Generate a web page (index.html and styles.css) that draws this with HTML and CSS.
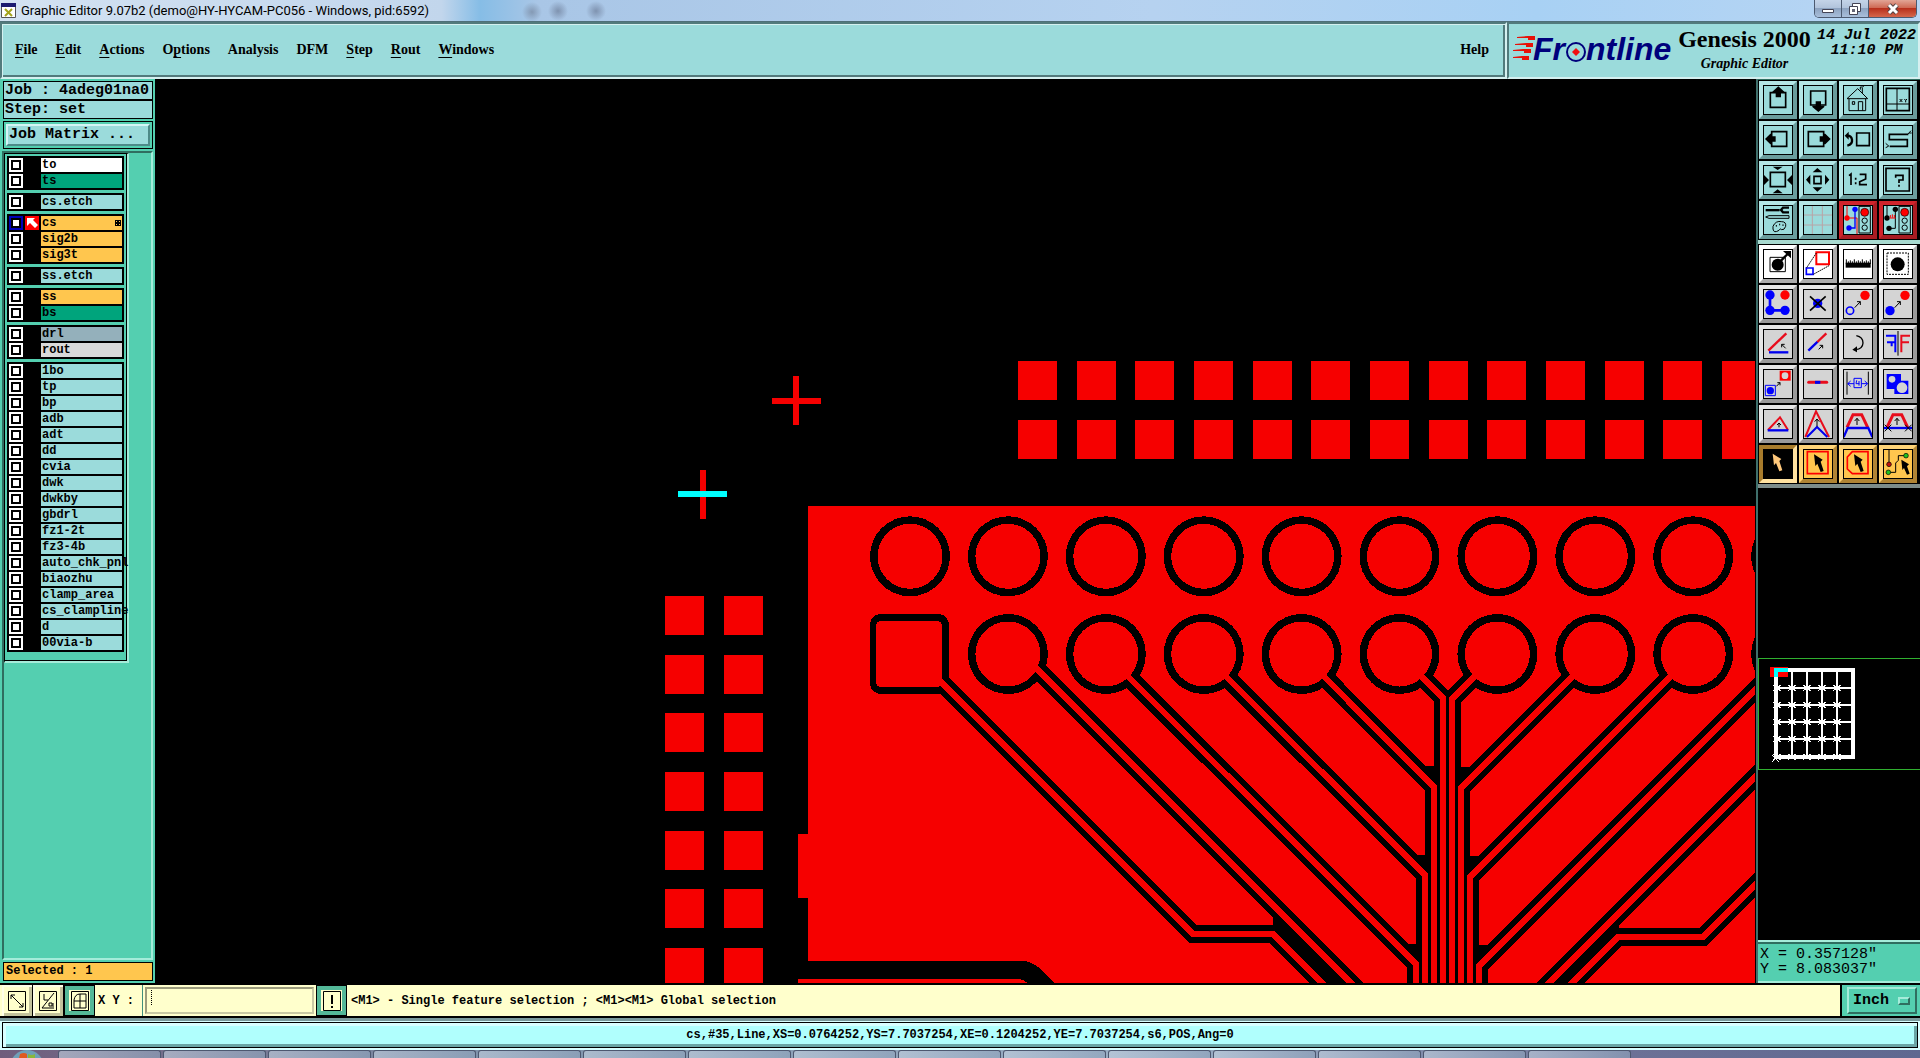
FILE: index.html
```html
<!DOCTYPE html>
<html lang="en">
<head>
    <meta charset="UTF-8">
    <meta name="viewport" content="width=device-width, initial-scale=1.0">
    <title>Graphic Editor 9.07b2</title>
    <link rel="stylesheet" href="styles.css">
</head>
<body>
    <!-- Window title -->
    <div class="titlebar">
        <svg class="app-icon" viewBox="0 0 15 15"><path fill="#fff" stroke="#555" d="M.5.5h14v14H.5z"/><path fill="#1b1b70" d="M0 0h15v4H0z"/><path stroke="#a3a31c" stroke-width="2" d="M4 6l7 7M11 6l-7 7"/></svg>
        <span class="title">Graphic Editor 9.07b2 (demo@HY-HYCAM-PC056 - Windows, pid:6592)</span>
        <div class="win-buttons">
            <button aria-label="Minimize"><svg viewBox="0 0 14 12"><path fill="#fff" stroke="#445" d="M1.5 6.5h11v3h-11z"/></svg></button>
            <button aria-label="Restore"><svg viewBox="0 0 14 12"><path fill="#fff" stroke="#445" d="M4.5.5h8v8h-8z"/><path fill="#fff" stroke="#445" d="M1.5 3.5h8v8h-8z"/><path fill="#667" d="M4 6h3v3H4z"/></svg></button>
            <button class="close" aria-label="Close"><svg viewBox="0 0 14 12"><path stroke="#544" stroke-width="5" d="M3 2l8 8M11 2l-8 8"/><path stroke="#fff" stroke-width="3" d="M3 2l8 8M11 2l-8 8"/></svg></button>
        </div>
    </div>

    <header>
        <nav class="menubar">
            <button><u>F</u>ile</button>
            <button><u>E</u>dit</button>
            <button><u>A</u>ctions</button>
            <button>O<u>p</u>tions</button>
            <button>Analysis</button>
            <button>DFM</button>
            <button><u>S</u>tep</button>
            <button><u>R</u>out</button>
            <button><u>W</u>indows</button>
            <button class="help">Help</button>
        </nav>
        <div class="brand">
            <svg class="logo" viewBox="0 0 164 48">
                <g fill="#e81008">
                    <path d="M4 13l11-1h7v4h-7v-2L4 14z"/>
                    <path d="M2 20l11-1h7v4h-7v-2L2 21z"/>
                    <path d="M0 26l10-1h8v4h-7v-2L0 27z"/>
                    <path d="M0 33l9-1h7v4H9v-2L0 34z"/>
                </g>
                <text x="20" y="36" class="logo-text">Fr</text>
                <text x="73" y="36" class="logo-text">ntline</text>
                <circle cx="63" cy="28" r="9" fill="#9bdbdb" stroke="#00007c" stroke-width="2"/>
                <path fill="#f01010" d="M63 24l4 4-4 4-4-4z"/>
            </svg>
            <div class="product">
                <div class="product-name">Genesis 2000</div>
                <div class="product-sub">Graphic Editor</div>
            </div>
            <div class="clock">14 Jul 2022<br>11:10 PM</div>
        </div>
    </header>

    <main>
        <!-- Job and layers -->
        <aside class="left">
            <div class="job">Job : 4adeg01na0</div>
            <div class="job">Step: set</div>
            <div class="matrix"><button>Job Matrix ...</button></div>
            <div class="layer-area">
                <div class="layer-list">
                    <div class="group">
                        <label class="layer white"><input type="checkbox"><i></i><span>to</span></label>
                        <label class="layer mask"><input type="checkbox"><i></i><span>ts</span></label>
                    </div>
                    <div class="group">
                        <label class="layer"><input type="checkbox"><i></i><span>cs.etch</span></label>
                    </div>
                    <div class="group">
                        <label class="layer signal current"><input type="checkbox" checked><i><svg viewBox="0 0 14 14"><path fill="#fff" d="M2 2h8L8 4l5 5-3 3-5-5-3 3z"/></svg></i><span>cs<svg class="mark" viewBox="0 0 6 6"><path fill="#000" d="M0 0h6v6H0z"/><path fill="#ffc64e" d="M1 1h1v1H1zM4 1h1v1H4zM1 4h1v1H1zM4 4h1v1H4z"/></svg></span></label>
                        <label class="layer signal"><input type="checkbox"><i></i><span>sig2b</span></label>
                        <label class="layer signal"><input type="checkbox"><i></i><span>sig3t</span></label>
                    </div>
                    <div class="group">
                        <label class="layer"><input type="checkbox"><i></i><span>ss.etch</span></label>
                    </div>
                    <div class="group">
                        <label class="layer signal"><input type="checkbox"><i></i><span>ss</span></label>
                        <label class="layer mask"><input type="checkbox"><i></i><span>bs</span></label>
                    </div>
                    <div class="group">
                        <label class="layer drill"><input type="checkbox"><i></i><span>drl</span></label>
                        <label class="layer rout"><input type="checkbox"><i></i><span>rout</span></label>
                    </div>
                    <div class="group">
                        <label class="layer"><input type="checkbox"><i></i><span>1bo</span></label>
                        <label class="layer"><input type="checkbox"><i></i><span>tp</span></label>
                        <label class="layer"><input type="checkbox"><i></i><span>bp</span></label>
                        <label class="layer"><input type="checkbox"><i></i><span>adb</span></label>
                        <label class="layer"><input type="checkbox"><i></i><span>adt</span></label>
                        <label class="layer"><input type="checkbox"><i></i><span>dd</span></label>
                        <label class="layer"><input type="checkbox"><i></i><span>cvia</span></label>
                        <label class="layer"><input type="checkbox"><i></i><span>dwk</span></label>
                        <label class="layer"><input type="checkbox"><i></i><span>dwkby</span></label>
                        <label class="layer"><input type="checkbox"><i></i><span>gbdrl</span></label>
                        <label class="layer"><input type="checkbox"><i></i><span>fz1-2t</span></label>
                        <label class="layer"><input type="checkbox"><i></i><span>fz3-4b</span></label>
                        <label class="layer"><input type="checkbox"><i></i><span>auto_chk_pnl</span></label>
                        <label class="layer"><input type="checkbox"><i></i><span>biaozhu</span></label>
                        <label class="layer"><input type="checkbox"><i></i><span>clamp_area</span></label>
                        <label class="layer"><input type="checkbox"><i></i><span>cs_clampline</span></label>
                        <label class="layer"><input type="checkbox"><i></i><span>d</span></label>
                        <label class="layer"><input type="checkbox"><i></i><span>00via-b</span></label>
                    </div>
                </div>
            </div>
            <div class="selected">Selected : 1</div>
        </aside>

        <!-- Board view -->
        <section class="canvas">
            <svg viewBox="155 79 1601 904" preserveAspectRatio="xMinYMin slice" shape-rendering="crispEdges">
                <defs>
                    <g id="traces" fill="none">
                        <path d="M913 654L1193 934H1273L1332 993"/>
                        <path d="M1022 654L1362 994"/>
                        <path d="M1105.6 654L1416 964V990"/>
                        <path d="M1203.5 654L1425 875V990"/>
                        <path d="M1301.4 654L1434 787V990"/>
                        <path d="M1399.3 654L1443 698V990"/>
                        <path d="M1497.2 654L1452 699V990"/>
                        <path d="M1595 654L1461 788V990"/>
                        <path d="M1693 654L1470 877V990"/>
                        <path d="M1791 654L1479 966V990"/>
                        <path d="M1765 767L1539 993"/>
                        <path d="M1765 875L1703 937H1618L1563 992"/>
                    </g>
                </defs>
                <g fill="#f60000">
                    <path d="M808 506H1755V984H808V898H798V834H808z"/>
                    <path stroke="#f60000" stroke-width="39" stroke-dasharray="39 19.65" d="M1018 380.5H1755M1018 439.5H1755M684.5 596V990M743.5 596V990"/>
                    <path d="M793 376h6v49h-6zM772 398h49v6h-49zM700 470h6v49h-6z"/>
                </g>
                <path fill="#0ff" d="M678 491h49v6h-49z"/>
                <!-- bottom left slot -->
                <path d="M806 961H1026Q1033 963 1038 967L1055 984H1028Q1024 979 1017 979H806z"/>
                <path fill="#f60000" d="M798 979h219q7 1 11 5H798z"/>
                <!-- clearances -->
                <g>
                    <rect x="870" y="614" width="79" height="80" rx="11"/>
                    <path fill="none" stroke="#000" stroke-width="80" stroke-linecap="round" stroke-dasharray="0 97.9" d="M910 556.3H1850M1007.9 654H1850"/>
                    <use href="#traces" stroke="#000" stroke-width="18"/>
                    <path d="M1273 905V934L1322 983H1352zM1619 920V937L1573 983H1549L1608 920zM1426 766h12v25zM1462 767h9l-14 20v-20zM1417 855h12v25zM1471 856h9l-14 20v-20zM1408 944h12v25zM1480 945h9l-14 20v-20z"/>
                </g>
                <!-- pads and tracks -->
                <g>
                    <rect x="876" y="621" width="66" height="66" rx="5" fill="#f60000"/>
                    <path fill="none" stroke="#f60000" stroke-width="65" stroke-linecap="round" stroke-dasharray="0 97.9" d="M910 556.3H1850M1007.9 654H1850"/>
                    <use href="#traces" stroke="#f60000" stroke-width="6"/>
                </g>
                <path d="M1755 79h1v904h-1z"/>
            </svg>
        </section>

        <!-- Tools -->
        <aside class="right">
            <div class="tools view-tools">
                <button aria-label="Pan up"><svg viewBox="3 3 84 84"><path class="k5" d="M22 23h46v44H22z"/><path d="M46 4l18 16v4H54v13H38V24H28v-4z"/></svg></button>
                <button aria-label="Pan down"><svg viewBox="3 3 84 84"><path class="k5" d="M23 18h45v42H23z"/><path d="M46 81L28 66v-4h10V49h16v13h10v4z"/></svg></button>
                <button aria-label="Home"><svg viewBox="3 3 84 84"><path class="k3" d="M12 41L44 11 74 41zM18 41v36h50V41M52 14V6h6l6-4M58 8v16M46 77V50h13v27M28 50h7v8h-7z"/></svg></button>
                <button aria-label="Zoom to XY"><svg viewBox="3 3 84 84"><path class="k5" d="M10 10h69v67H10z"/><path class="k3" d="M42 10v67M10 57h69M50 42l8 9M58 42l-8 9M64 42l4 4 4-4M68 46v6"/></svg></button>
                <button aria-label="Pan left"><svg viewBox="3 3 84 84"><path class="k5" d="M26 20h45v44H26z"/><path d="M6 42l16-16h4v8h12v16H26v8h-4z"/></svg></button>
                <button aria-label="Pan right"><svg viewBox="3 3 84 84"><path class="k5" d="M16 20h46v44H16z"/><path d="M83 42L67 26h-4v8H50v16h13v8h4z"/></svg></button>
                <button aria-label="Previous view"><svg viewBox="3 3 84 84"><path class="k5" d="M41 24h38v38H41z"/><path class="k7" d="M13 62q16-4 14-18-2-12-14-12"/><path d="M5 32l12-12v24z"/></svg></button>
                <button aria-label="Serpentine"><svg viewBox="3 3 84 84"><path class="k5" d="M76 28H19v16h54v20H20"/><path class="k3" d="M74 28l10-11M78 24h8M18 64L8 55M8 68l8-4"/></svg></button>
                <button aria-label="Zoom in"><svg viewBox="3 3 84 84"><path class="k5" d="M22 22h45v43H22z"/><path d="M29 5h30L44 15zM29 85h30L44 73zM3 30v30l15-15zM87 30v30L72 45z"/></svg></button>
                <button aria-label="Zoom out"><svg viewBox="3 3 84 84"><path class="k5" d="M33 34h21v22H33z"/><path d="M43 9l15 13H29zM43 80l15-13H29zM9 44l13-15v30zM79 44L66 29v30z"/></svg></button>
                <button aria-label="Scale 1:2"><svg viewBox="3 3 84 84"><path class="k5" d="M18 32l6-5v33M38 38v6M38 52v6M50 28h18v14L50 50v9h22"/></svg></button>
                <button aria-label="Help on tool"><svg viewBox="3 3 84 84"><path class="k5" d="M9 10h70v68H9zM38 38v-7h22v14H48v9M48 59v6"/></svg></button>
                <button aria-label="Setup"><svg viewBox="3 3 84 84"><path d="M8 12h42v7H8z"/><path class="k7" d="M78 8H60l-6 7 6 7h18"/><path class="k3" d="M8 36l10-4h60v8H18zM30 64q8-18 26-14 14 0 12 14-4 12-12 10-4-6-8 2-16 10-18-4zM40 60v5M50 56v5M60 58v5"/></svg></button>
                <button aria-label="Grid"><svg viewBox="3 3 84 84"><path fill="none" stroke="#b8a4a6" stroke-width="3" d="M28 0v90M58 0v90M0 30h90M0 60h90"/></svg></button>
                <button class="alert" aria-label="DRC on"><svg viewBox="3 3 84 84"><path fill="none" stroke="#f00" stroke-width="3" d="M12 0v39h30v51"/><path fill="none" stroke="#00f" stroke-width="4" d="M36 13v56H18"/><g fill="#00f"><circle cx="36" cy="13" r="8"/><circle cx="18" cy="69" r="8"/></g><circle cx="12" cy="39" r="8" fill="#f00"/><path class="k3" d="M48 4h34v80H48z"/><circle cx="65" cy="22" r="12" fill="#f00" stroke="#000" stroke-width="2"/><g class="k3"><circle cx="65" cy="47" r="8"/><circle cx="65" cy="68" r="8"/></g></svg></button>
                <button class="alert" aria-label="DRC off"><svg viewBox="3 3 84 84"><path class="k3" d="M12 0v39M37 13v57H18"/><circle cx="37" cy="13" r="8"/><circle cx="12" cy="39" r="8"/><circle cx="18" cy="70" r="8"/><path fill="none" stroke="#f00" stroke-width="3" d="M20 39h18M22 30v8M28 28v10M34 30v8"/><path class="k3" d="M48 4h34v80H48z"/><circle cx="65" cy="22" r="12" fill="#f00" stroke="#000" stroke-width="2"/><g class="k3"><circle cx="65" cy="47" r="8"/><circle cx="65" cy="68" r="8"/></g></svg></button>
            </div>
            <div class="tools edit-tools">
                <button class="plain" aria-label="Measure pad"><svg viewBox="3 3 84 84"><path class="k3" d="M21 25h46v43H21z"/><circle cx="44" cy="47" r="18"/><path class="k7" d="M54 35l20-20"/><path d="M60 6h24v22z"/></svg></button>
                <button class="plain" aria-label="Measure net"><svg viewBox="3 3 84 84"><path fill="none" stroke="#f00" stroke-width="6" d="M40 10h38v36H40z"/><path fill="none" stroke="#00f" stroke-width="5" d="M10 57h20v19H10z"/><path class="k3" stroke-dasharray="5 2" d="M11 56L40 12M31 76l47-26"/></svg></button>
                <button class="plain" aria-label="Ruler"><svg viewBox="3 3 84 84"><path d="M8 41h75v15H8z"/><path class="k3" d="M10 31v14M16 37v8M22 34v8M28 37v8M34 31v14M40 37v8M46 34v8M52 37v8M58 31v14M64 37v8M70 34v8M76 37v8M82 31v14"/></svg></button>
                <button class="plain" aria-label="Select frame"><svg viewBox="3 3 84 84"><path class="k3" stroke-dasharray="6 3" d="M12 12h64v64H12z"/><circle cx="44" cy="46" r="21"/></svg></button>

                <button aria-label="Copy pads"><svg viewBox="3 3 84 84"><path fill="none" stroke="#00f" stroke-width="8" d="M21 18v46h45"/><g fill="#00f"><circle cx="21" cy="18" r="14"/><circle cx="21" cy="64" r="14"/><circle cx="66" cy="64" r="14"/></g><circle cx="66" cy="18" r="14" fill="#f00"/></svg></button>
                <button aria-label="Delete"><svg viewBox="3 3 84 84"><circle cx="44" cy="43" r="14" fill="#00f"/><path class="k5" d="M21 22l47 43M68 22L21 65"/></svg></button>
                <button aria-label="Move"><svg viewBox="3 3 84 84"><circle cx="21" cy="65" r="11" fill="none" stroke="#00f" stroke-width="5"/><path class="k3" d="M35 56l17-18M42 38h10v10"/><circle cx="66" cy="19" r="14" fill="#f00"/></svg></button>
                <button aria-label="Copy"><svg viewBox="3 3 84 84"><circle cx="21" cy="65" r="14" fill="#00f"/><path class="k3" d="M35 56l17-18M42 38h10v10"/><circle cx="66" cy="19" r="14" fill="#f00"/></svg></button>

                <button aria-label="Rotate line"><svg viewBox="3 3 84 84"><path fill="none" stroke="#e80c1c" stroke-width="7" d="M16 65l54-52"/><path fill="none" stroke="#00e" stroke-width="7" d="M18 70h58"/><path class="k3" d="M68 58L56 46M56 55v-9h9"/></svg></button>
                <button aria-label="Extend line"><svg viewBox="3 3 84 84"><path fill="none" stroke="#00e" stroke-width="7" d="M16 65l28-27"/><path fill="none" stroke="#e80c1c" stroke-width="7" d="M43 39l27-26"/><path class="k3" d="M47 61l12-12M50 49h9v9"/></svg></button>
                <button aria-label="Rotate"><svg viewBox="3 3 84 84"><path fill="none" stroke="#000" stroke-width="4" d="M40 20q20 4 20 22-1 18-22 20"/><path d="M28 62l14-10v18z"/></svg></button>
                <button aria-label="Mirror"><svg viewBox="3 3 84 84"><path fill="none" stroke="#00f" stroke-width="6" d="M9 20h28v50M12 40h25M26 40v12"/><path class="k3" d="M45 6v74"/><path fill="none" stroke="#e80c1c" stroke-width="6" d="M81 20H55v50M55 40h23"/></svg></button>

                <button aria-label="Replace symbol"><svg viewBox="3 3 84 84"><path fill="#f00" d="M50 5h33v30H50z"/><circle cx="66" cy="20" r="10" fill="#d4d4d4"/><path fill="none" stroke="#00f" stroke-width="3" d="M7 49h30v31H7z"/><circle cx="22" cy="65" r="11" fill="#00f"/><path class="k3" d="M40 52l11-11M43 41h8v8"/></svg></button>
                <button aria-label="Break line"><svg viewBox="3 3 84 84"><path fill="none" stroke="#e80c1c" stroke-width="9" stroke-linecap="round" d="M17 40h54"/><path stroke="#00e" stroke-width="9" d="M36 40h16"/></svg></button>
                <button aria-label="Set spacing"><svg viewBox="3 3 84 84"><path class="k3" d="M12 8v69M76 8v69"/><path fill="none" stroke="#00f" stroke-width="3" d="M33 28h22v28H33zM15 44h18M55 44h18M23 36l-9 8 9 8M65 36l9 8-9 8M41 34l-2 10h10M48 36v14"/></svg></button>
                <button aria-label="Change polarity"><svg viewBox="3 3 84 84"><path fill="#00f" d="M11 15h43v20h22v40H34V60H11z"/><circle cx="27" cy="31" r="10" fill="#d4d4d4"/><circle cx="57" cy="56" r="16" fill="#d4d4d4"/></svg></button>

                <button aria-label="Move corner"><svg viewBox="3 3 84 84"><path fill="none" stroke="#e80c1c" stroke-width="6" d="M15 63l36-38 24 38"/><path stroke="#00e" stroke-width="7" d="M14 64h62"/><path class="k3" d="M48 55V42M42 48l6-6 6 6"/></svg></button>
                <button aria-label="Stretch corner"><svg viewBox="3 3 84 84"><path fill="none" stroke="#e80c1c" stroke-width="6" d="M7 84L39 7l39 77"/><path fill="none" stroke="#00e" stroke-width="6" d="M12 84l30-30 31 30"/><path class="k3" d="M42 52V30M35 38l7-8 7 8"/></svg></button>
                <button aria-label="Stretch segment"><svg viewBox="3 3 84 84"><path fill="none" stroke="#e80c1c" stroke-width="9" d="M12 55l18-38h26l18 38"/><path fill="none" stroke="#00e" stroke-width="7" d="M2 84l12-27h62l12 27"/><path class="k3" d="M42 48V28M35 36l7-8 7 8"/></svg></button>
                <button aria-label="Split segment"><svg viewBox="3 3 84 84"><path fill="none" stroke="#e80c1c" stroke-width="9" d="M12 55l18-38h26l18 38"/><path stroke="#00e" stroke-width="7" d="M2 57h86"/><path class="k3" d="M42 48V28M35 36l7-8 7 8M5 47l20 20M25 47L5 67M66 47l20 20M86 47L66 67"/></svg></button>

                <button class="pick active" aria-label="Select feature"><svg viewBox="3 3 84 84"><path fill="#ffc87c" d="M29 14l26 16-6 6 9 28-9 3-10-25-6 7z"/></svg></button>
                <button class="pick" aria-label="Select in rectangle"><svg viewBox="3 3 84 84"><path fill="none" stroke="#f00" stroke-width="5" d="M13 8h62v66H13z"/><path d="M33 16l26 16-6 6 9 28-9 3-10-25-6 7z"/></svg></button>
                <button class="pick" aria-label="Select in polygon"><svg viewBox="3 3 84 84"><path fill="none" stroke="#f00" stroke-width="5" d="M28 8h47v66H28L13 60V24z"/><path d="M33 16l26 16-6 6 9 28-9 3-10-25-6 7z"/></svg></button>
                <button class="pick" aria-label="Select net"><svg viewBox="3 3 84 84"><path class="k3" d="M18 2v44M16 70h22V42l8-8V20h22"/><circle cx="18" cy="46" r="7" fill="#c01010" stroke="#000" stroke-width="2"/><circle cx="16" cy="70" r="7" fill="#1fc01f" stroke="#000" stroke-width="2"/><circle cx="69" cy="20" r="7" fill="#1fc01f" stroke="#000" stroke-width="2"/><path d="M55 32l23 14-6 6 8 22-8 3-9-20-5 6z"/></svg></button>
            </div>
            <div class="navigator">
                <svg viewBox="1758 488 162 454" preserveAspectRatio="xMinYMin meet" shape-rendering="crispEdges">
                    <path fill="none" stroke="#30b030" d="M1920 658.5H1758.5V769.5H1920"/>
                    <path fill="none" stroke="#fff" stroke-width="4" d="M1776 670h77v87h-77z"/>
                    <path fill="none" stroke="#fff" stroke-width="2" d="M1792 670v87M1807 670v87M1822 670v87M1837 670v87M1776 688h77M1776 705h77M1776 722h77M1776 739h77"/>
                    <defs>
                        <path id="x" d="M-4-3l8 6M4-3l-8 6"/>
                        <g id="xrow"><use href="#x" x="1777"/><use href="#x" x="1792"/><use href="#x" x="1807"/><use href="#x" x="1822"/><use href="#x" x="1837"/></g>
                    </defs>
                    <g stroke="#fff"><use href="#xrow" y="688"/><use href="#xrow" y="705"/><use href="#xrow" y="722"/><use href="#xrow" y="739"/><use href="#xrow" y="757"/><path d="M1772 755l7 7M1779 755l-7 7"/></g>
                    <path fill="#f00" d="M1770 667h18v10h-18z"/>
                    <path fill="#0ff" d="M1774 668h14v4h-10v5h-4z"/>
                </svg>
            </div>
            <div class="coords">X = 0.357128"<br>Y = 8.083037"</div>
        </aside>
    </main>

    <!-- Coordinate entry and messages -->
    <div class="entry">
        <button aria-label="Relative"><svg viewBox="0 0 18 20"><path class="k1" d="M.5.5h17v19H.5zM3 4l12 12M3 8V4h4M15 12v4h-4"/></svg></button>
        <button aria-label="Angle"><svg viewBox="0 0 18 20"><path class="k1" d="M.5.5h17v19H.5zM15 2L3 17h12M5 3v6h4M10 12h3v3h-3zM14 12v4"/></svg></button>
        <button class="on" aria-label="Snap"><svg viewBox="0 0 18 20"><path class="k1" d="M.5.5h17v19H.5zM3 9q1-6 6-6h6v14H3zM9 3v14M3 10h12"/></svg></button>
        <label for="xy">X Y :</label>
        <div class="xy-box"><input type="text" id="xy"></div>
        <button class="on" aria-label="Apply"><svg viewBox="0 0 18 20"><path class="k1" d="M.5.5h17v19H.5z"/><path d="M8 4h2v9H8zM8 15h2v2H8z"/></svg></button>
        <div class="message">&lt;M1&gt; - Single feature selection ; &lt;M1&gt;&lt;M1&gt; Global selection</div>
        <div class="units"><select aria-label="Units"><option>Inch</option><option>mm</option></select></div>
    </div>
    <div class="status"><div>cs,#35,Line,XS=0.0764252,YS=7.7037254,XE=0.1204252,YE=7.7037254,s6,POS,Ang=0</div></div>

    <div class="taskbar">
        <svg class="orb" viewBox="0 0 34 8"><circle cx="17" cy="17" r="17" fill="#6fa0b8"/><path fill="#e05a20" d="M10 4q4-2 7 0v4h-8z"/><path fill="#8ab83a" d="M18 4q4 2 7 0v4h-7z"/></svg>
        <i></i><i></i><i></i><i></i><i></i><i></i><i></i><i></i><i></i><i></i><i></i><i></i><i></i><i></i><i></i>
    </div>
</body>
</html>
```

FILE: styles.css
```css
*, *::after {
    box-sizing: border-box;
}

body {
    margin: 0;
    height: 100vh;
    display: flex;
    flex-direction: column;
    overflow: hidden;
    background: #000;
    color: #000;
    font: bold 12px/14px "Liberation Mono", monospace;
}

button {
    margin: 0;
    padding: 0;
    border: none;
    background: none;
    color: inherit;
    font: inherit;
}

svg {
    display: block;
}

.k1, .k3, .k5, .k7 {
    fill: none;
    stroke: #000;
}

.k1 { stroke-width: 1px; }
.k3 { stroke-width: 3px; }
.k5 { stroke-width: 5px; }
.k7 { stroke-width: 7px; }

/* title bar */
.titlebar {
    display: flex;
    align-items: center;
    height: 22px;
    flex: none;
    padding-right: 3px;
    background:
        radial-gradient(circle at 532px 12px, #8499b4 0, transparent 10px),
        radial-gradient(circle at 558px 11px, #7f93b0 0, transparent 10px),
        radial-gradient(circle at 596px 11px, #7f93b0 0, transparent 10px),
        linear-gradient(90deg, #d3e2f2 0, #c2d6ec 23%, #86bde6 25%, #a9c6e6 28%, #b6d2f0 60%, #a8d1f4 80%, #b9d5f3 100%);
    border-bottom: 1px solid #4f6f78;
}

.app-icon {
    width: 15px;
    height: 15px;
    margin-left: 1px;
}

.title {
    flex: 1;
    padding-left: 5px;
    font: 13px/20px Roboto, sans-serif;
}

.win-buttons {
    display: flex;
    align-self: flex-start;
    height: 18px;
    border: 1px solid #4c5a70;
    border-top: none;
    border-radius: 0 0 5px 5px;
    overflow: hidden;
}

.win-buttons button {
    width: 27px;
    display: flex;
    justify-content: center;
    align-items: center;
    border-right: 1px solid #4c5a70;
    background: linear-gradient(#c4d4e8 0, #b2c4dc 45%, #8da3c0 50%, #a9bfdb 100%);
}

.win-buttons .close {
    width: 47px;
    border: none;
    background: linear-gradient(#e2a596 0, #cf6a55 45%, #b8301c 50%, #d5674c 100%);
}

.win-buttons svg {
    width: 14px;
    height: 12px;
}

/* menu and brand */
header {
    display: flex;
    flex: none;
    height: 57px;
    background: #9bdbdb;
}

.menubar, .brand {
    border: 2px solid;
    border-color: #527a7c #d5f0f0 #d5f0f0 #527a7c;
}

.menubar {
    flex: 1;
    display: flex;
    align-items: center;
    gap: 18px;
    padding: 0 16px 2px 13px;
    font: bold 14px/18px "Liberation Serif", serif;
    box-shadow: inset 1px 1px #d5f0f0, inset -2px -2px #527a7c;
}

.menubar u {
    text-underline-offset: 3px;
}

.help {
    margin-left: auto;
}

.brand {
    width: 413px;
    display: flex;
    align-items: flex-start;
    padding: 0 2px 0 4px;
}

.logo {
    width: 164px;
    height: 48px;
    overflow: visible;
}

.logo-text {
    font: italic bold 32px "Liberation Sans", sans-serif;
    fill: #00007c;
}

.product {
    flex: 1;
    padding-right: 5px;
    text-align: center;
    font-family: "Liberation Serif", serif;
    white-space: nowrap;
}

.product-name {
    font-size: 24px;
    line-height: 30px;
}

.product-sub {
    font-size: 14px;
    font-style: italic;
    line-height: 20px;
}

.clock {
    font-size: 15px;
    line-height: 15px;
    font-style: italic;
    text-align: center;
    padding-top: 4px;
}

/* main area */
main {
    flex: 1;
    display: flex;
    min-height: 0;
}

.left {
    width: 155px;
    flex: none;
    display: flex;
    flex-direction: column;
    padding: 2px 2px 2px 3px;
    background: #54cfb0;
}

.job, .matrix, .selected {
    border: 1px solid #000;
}

.job {
    height: 19px;
    padding-left: 1px;
    background: #9bdbdb;
    font-size: 15px;
    line-height: 18px;
    white-space: nowrap;
}

.matrix {
    margin-top: 2px;
    padding: 2px;
}

.matrix button {
    display: block;
    width: 100%;
    height: 22px;
    padding-left: 1px;
    text-align: left;
    background: #9bdbdb;
    border: 2px solid;
    border-color: #d5f5f5 #4d8a88 #4d8a88 #d5f5f5;
    font-size: 15px;
    line-height: 18px;
}

.layer-area {
    flex: 1;
    min-height: 0;
    margin: 2px 0 2px -1px;
    border: 2px solid;
    border-color: #2f6e60 #a5ecda #a5ecda #2f6e60;
}

.layer-list {
    width: 125px;
    padding: 2px 2px 9px 2px;
    display: flex;
    flex-direction: column;
    gap: 3px;
    border: 1px solid #000;
    border-right: 2px solid #a5ecda;
    border-bottom: 2px solid #a5ecda;
    box-shadow: inset -1px -1px #000;
}

.group {
    width: 117px;
    display: flex;
    flex-direction: column;
    gap: 2px;
    padding: 2px;
    background: #000;
}

.layer {
    display: flex;
    height: 14px;
    white-space: nowrap;
}

.layer input {
    appearance: none;
    flex: none;
    width: 14px;
    height: 14px;
    margin: 0;
    border: 2px solid #fff;
    background: #fff;
    box-shadow: inset 0 0 0 2px #000;
}

.layer input:checked {
    border-color: #0000b8;
}

.layer i {
    flex: none;
    width: 14px;
    margin: 0 2px;
}

.current i {
    background: #f00;
}

.layer span {
    flex: 1;
    display: flex;
    align-items: center;
    min-width: 0;
    padding-left: 1px;
    background: #9bdbdb;
}

.white span { background: #fff; }
.mask span { background: #00a47c; }
.signal span { background: #ffc64e; }
.drill span { background: #94b0bb; }
.rout span { background: #d9d9d9; }

.mark {
    width: 6px;
    height: 6px;
    margin: 0 1px 0 auto;
}

.selected {
    height: 19px;
    padding-left: 2px;
    background: #ffc64e;
    line-height: 17px;
}

.canvas {
    flex: 1;
    min-width: 0;
    background: #000;
}

.canvas svg {
    width: 100%;
    height: 100%;
}

/* tool column */
.right {
    width: 164px;
    flex: none;
    display: flex;
    flex-direction: column;
    border-left: 2px solid #3f706c;
}

.tools {
    display: grid;
    grid-template-columns: repeat(4, 38px);
    grid-auto-rows: 38px;
    gap: 2px;
    padding: 2px 1px 1px 1px;
    background: #000;
}

.view-tools {
    padding-top: 1px;
    border-top: 1px solid #2f6e60;
    border-bottom: 4px solid #a8dad0;
}

.edit-tools {
    padding-top: 1px;
    border-bottom: 4px solid #7d8c8a;
}

.tools button {
    padding: 0;
    border: 4px solid;
    display: flex;
    background: #9bdbdb;
    border-color: #b4e6e6 #6a9c9c #6a9c9c #b4e6e6;
}

.tools svg {
    width: 30px;
    height: 30px;
    border: 1px solid #000;
}

.tools .alert {
    border-color: #d0242c #a81c22 #a81c22 #d0242c;
}

.edit-tools button {
    background: #d4d4d4;
    border-color: #e6e6e6 #9a9a9a #9a9a9a #e6e6e6;
}

.edit-tools .plain {
    background: #fff;
    border-color: #fff #acacac #acacac #fff;
}

.edit-tools .pick {
    background: #ffc64e;
    border-color: #ffd478 #b08434 #b08434 #ffd478;
}

.edit-tools .active {
    border-color: #a87c2c #ffe2a0 #ffe2a0 #a87c2c;
}

.active svg {
    background: #000;
}

.navigator {
    flex: 1;
    min-height: 0;
    background: #000;
}

.navigator svg {
    width: 100%;
}

.coords {
    height: 43px;
    padding: 5px 0 0 2px;
    border-top: 2px solid #a5ecda;
    border-bottom: 2px solid #a5ecda;
    background: #54cfb0;
    font-size: 15px;
    font-weight: normal;
    line-height: 15px;
    box-shadow: inset 0 2px #2f6e60;
}

/* entry line */
.entry {
    display: flex;
    flex: none;
    height: 35px;
    border-top: 2px solid #000;
    border-bottom: 2px solid #000;
    background: #ffffcc;
    padding-left: 2px;
}

.entry button {
    width: 31px;
    flex: none;
    display: flex;
    align-items: center;
    justify-content: center;
    border-right: 1px solid #000;
    background: #ffffcc;
    box-shadow: inset 2px 2px #ffffe8, inset -3px -3px #c2c29c;
}

.entry svg {
    width: 18px;
    height: 20px;
}

.entry .on {
    border: 1px solid #000;
    box-shadow: inset 0 0 0 4px #54b898;
}

.entry label {
    width: 48px;
    padding-left: 3px;
    line-height: 33px;
    border-right: 1px solid #3f8f7c;
}

.xy-box {
    position: relative;
    width: 173px;
    padding: 2px;
}

.xy-box::after {
    content: "";
    position: absolute;
    left: 8px;
    top: 5px;
    height: 15px;
    border-left: 1px dotted #000;
}

.xy-box input {
    width: 100%;
    height: 100%;
    padding: 0 6px;
    background: #ffffcc;
    border: 2px solid;
    border-color: #9c9c7c #c9c9a4 #c9c9a4 #9c9c7c;
    font: inherit;
    outline: none;
}

.message {
    flex: 1;
    padding-left: 4px;
    line-height: 33px;
    white-space: nowrap;
    overflow: hidden;
}

.units {
    position: relative;
    width: 80px;
    padding: 2px 3px 2px 5px;
    border-left: 2px solid #000;
    background: #54cfb0;
}

.units select {
    appearance: none;
    width: 100%;
    height: 100%;
    padding: 0 4px;
    background: #54cfb0;
    border: 2px solid;
    border-color: #a5ecda #2f6e60 #2f6e60 #a5ecda;
    border-radius: 0;
    color: #000;
    font: bold 15px "Liberation Mono", monospace;
}

.units::after {
    content: "";
    position: absolute;
    right: 10px;
    top: 12px;
    width: 12px;
    height: 8px;
    border: 2px solid;
    border-color: #a5ecda #2f6e60 #2f6e60 #a5ecda;
}

.status {
    flex: none;
    height: 32px;
    padding: 1px 2px 2px 2px;
    border-top: 3px solid #7a9a9c;
    background: #d8ffff;
}

.status div {
    height: 26px;
    border: 1px solid #000;
    background: #b0fffd;
    box-shadow: inset 3px 3px #d8ffff, inset -3px -3px #6aa5a5;
    text-align: center;
    line-height: 24px;
}

.taskbar {
    flex: none;
    display: flex;
    gap: 2px;
    height: 8px;
    padding-left: 10px;
    overflow: hidden;
    background: linear-gradient(90deg, #6f5d7c 0, #7e92aa 25%, #9bb0c6 60%, #6c7196 85%, #5f6890 100%);
}

.orb {
    width: 34px;
    height: 8px;
    margin-right: 12px;
}

.taskbar i {
    width: 103px;
    border: 1px solid #4d5870;
    border-bottom: none;
    border-radius: 3px 3px 0 0;
    background: linear-gradient(90deg, #c3d0dfa0, #8fa3bba0);
}
```
